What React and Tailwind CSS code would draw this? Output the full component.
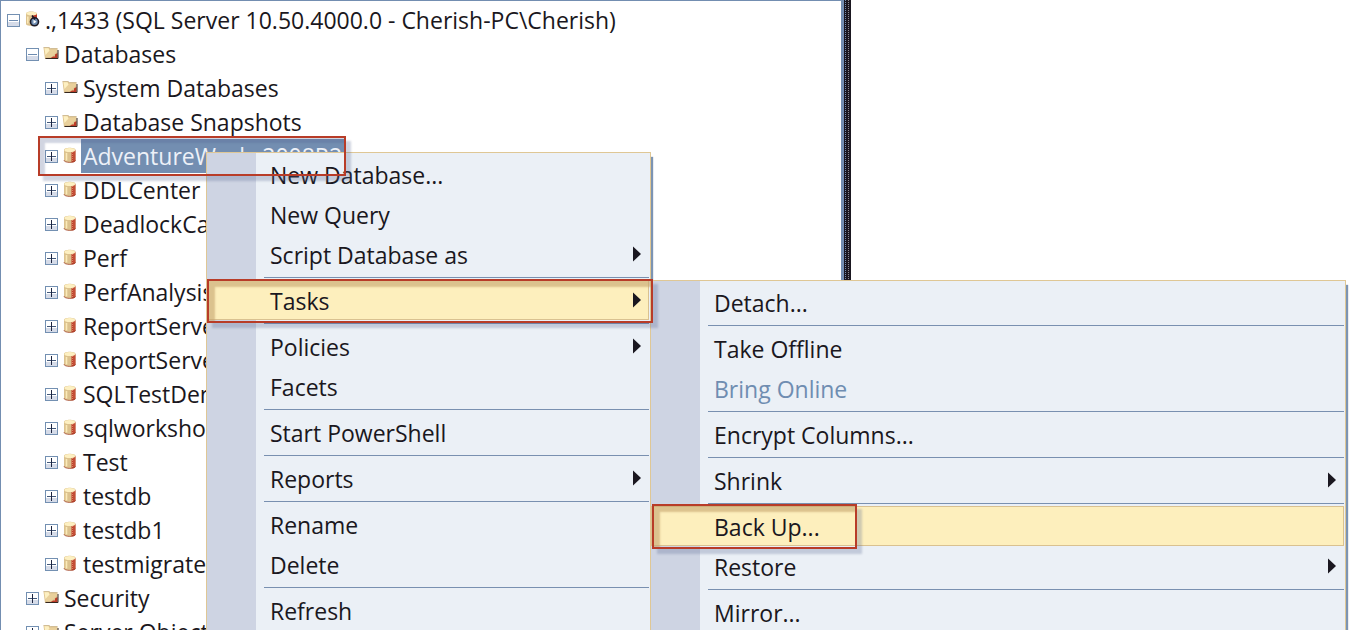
const tree = [
  { level: 0, label: ".,1433 (SQL Server 10.50.4000.0 - Cherish-PC\\Cherish)", icon: "server", open: true },
  { level: 1, label: "Databases", icon: "folder", open: true },
  { level: 2, label: "System Databases", icon: "folder" },
  { level: 2, label: "Database Snapshots", icon: "folder" },
  { level: 2, label: "AdventureWorks2008R2", icon: "database", selected: true },
  { level: 2, label: "DDLCenter", icon: "database" },
  { level: 2, label: "DeadlockCase", icon: "database" },
  { level: 2, label: "Perf", icon: "database" },
  { level: 2, label: "PerfAnalysis", icon: "database" },
  { level: 2, label: "ReportServer", icon: "database" },
  { level: 2, label: "ReportServerTempDB", icon: "database" },
  { level: 2, label: "SQLTestDemo", icon: "database" },
  { level: 2, label: "sqlworkshop", icon: "database" },
  { level: 2, label: "Test", icon: "database" },
  { level: 2, label: "testdb", icon: "database" },
  { level: 2, label: "testdb1", icon: "database" },
  { level: 2, label: "testmigrate", icon: "database" },
  { level: 1, label: "Security", icon: "folder" },
  { level: 1, label: "Server Objects", icon: "folder" },
];

const databaseMenu = [
  [{ label: "New Database..." }, { label: "New Query" }, { label: "Script Database as", sub: true }],
  [{ label: "Tasks", sub: true, active: true }],
  [{ label: "Policies", sub: true }, { label: "Facets" }],
  [{ label: "Start PowerShell" }],
  [{ label: "Reports", sub: true }],
  [{ label: "Rename" }, { label: "Delete" }],
  [{ label: "Refresh" }],
];

const tasksMenu = [
  [{ label: "Detach..." }],
  [{ label: "Take Offline" }, { label: "Bring Online", disabled: true }],
  [{ label: "Encrypt Columns..." }],
  [{ label: "Shrink", sub: true }],
  [{ label: "Back Up...", active: true }, { label: "Restore", sub: true }],
  [{ label: "Mirror..." }],
];

const indents = ["pl-[6px]", "pl-[25px]", "pl-[44px]"];

function Toggle({ open, label }) {
  return (
    <button
      type="button"
      aria-label={(open ? "Collapse " : "Expand ") + label}
      className="mr-1 size-[13px] shrink-0"
    >
      <svg viewBox="0 0 13 13" className="block size-[13px]" shapeRendering="crispEdges" aria-hidden="true">
        <rect x="0.5" y="0.5" width="12" height="12" fill="#fff" stroke="#7390b2" />
        <rect x="1" y="8" width="11" height="4" fill="#d5dbe8" />
        <rect x="2" y="6" width="9" height="1" fill={open ? "#6d8bb0" : "#44597a"} />
        {!open && <rect x="6" y="2" width="1" height="9" fill="#1d2540" />}
      </svg>
    </button>
  );
}

function FolderIcon() {
  return (
    <svg viewBox="0 0 16 16" className="mb-[2px] block size-4" aria-hidden="true">
      <path d="M0.500 2.500h5.500L7.500 3.500h7V14H2z" fill="#dcc28e" />
      <path d="M1 3h4.500l1 1.500h7.500v2L9 12H2.500z" fill="#e9d09b" />
      <path d="M1.500 3.300h4l1 2.200L2.500 10z" fill="#fdf0c2" />
      <path d="M14.500 8V13.500H7l3-2h2V9.500z" fill="#bd3b27" />
      <path d="M2.500 13.500H15V5" fill="none" stroke="#33251f" strokeWidth="1" />
      <path d="M0.500 2.500h5.500L7.500 3.500h7" fill="none" stroke="#c9b48a" strokeWidth="0.800" />
    </svg>
  );
}

function DatabaseIcon() {
  return (
    <svg viewBox="0 0 16 16" className="mb-[2px] block size-4" aria-hidden="true">
      <path d="M2 2.800C2 0 13.500 0 13.500 2.800v10.400c0 2.900-11.500 2.900-11.500 0z" fill="#dcc28e" />
      <path d="M9.500 4.800c2.500 0 4-.8 4-2v10.400c0 1.600-1.800 2.200-4 2.200z" fill="#bd3b27" />
      <path d="M10.500 5v9.500M12 4.500v9" stroke="#e5ab83" strokeWidth="0.700" strokeDasharray="1 1" />
      <ellipse cx="7.700" cy="2.900" rx="5.300" ry="2" fill="#fdf0c2" />
      <path d="M4.500 6v7.500" stroke="#fbeab8" strokeWidth="1.600" />
      <path d="M2 13.200c0 2.900 11.500 2.900 11.500 0" fill="none" stroke="#a34731" strokeWidth="0.800" />
    </svg>
  );
}

function ServerIcon() {
  return (
    <svg viewBox="0 0 16 16" className="mb-[2px] block size-4" aria-hidden="true">
      <path d="M2 2.200C3 0 11 0 13 2.200v11C12 15.500 3 15.500 2 13.200z" fill="#dcc28e" />
      <path d="M8 4.500c3 0 5-.8 5-2.200v8H8z" fill="#bd3b27" />
      <ellipse cx="7.500" cy="2.500" rx="5.200" ry="1.800" fill="#fdf0c2" />
      <path d="M3.800 5.500v7" stroke="#fbeab8" strokeWidth="1.500" />
      <circle cx="10.500" cy="10.800" r="4" fill="#6f8db1" stroke="#1c1a26" strokeWidth="1.600" />
      <path d="M9.500 8.800v4l3-2z" fill="#fff" />
      <path d="M8 4.500l3 4" stroke="#1c1a26" strokeWidth="1.500" />
    </svg>
  );
}

const icons = { server: ServerIcon, folder: FolderIcon, database: DatabaseIcon };

function TreeRow({ node }) {
  const Icon = icons[node.icon];
  return (
    <li
      role="treeitem"
      aria-selected={Boolean(node.selected)}
      className={"flex h-[34px] items-center " + indents[node.level]}
    >
      <Toggle open={node.open} label={node.label} />
      <Icon />
      <span
        className={
          "ml-[3px] flex h-full items-center whitespace-nowrap px-[2px] " +
          (node.selected ? "bg-[#738eb1] text-[#edf1f8]" : "")
        }
      >
        {node.label}
      </span>
    </li>
  );
}

function MenuItem({ item }) {
  return (
    <button
      type="button"
      role="menuitem"
      aria-haspopup={item.sub ? "menu" : undefined}
      disabled={item.disabled}
      className={
        "flex h-10 w-full items-center justify-between border pl-[62px] pr-[6px] text-left whitespace-nowrap " +
        (item.active ? "border-[#d9c190] bg-[#fdefbd] " : "border-transparent ") +
        (item.disabled ? "text-[#6f8db1]" : "")
      }
    >
      <span className="pt-[2px]">{item.label}</span>
      {item.sub && (
        <svg viewBox="0 0 9 16" className="h-4 w-[9px]" aria-hidden="true">
          <path d="M0 0.500v15L8 8z" fill="#1a1720" />
        </svg>
      )}
    </button>
  );
}

function Menu({ groups, label, className }) {
  return (
    <div
      role="menu"
      aria-label={label}
      className={
        "absolute border border-[#dfc795] bg-[linear-gradient(90deg,#ced4e3_49px,#ebf0f6_49px)] py-px pr-px shadow-[2px_5px_1px_#7c94b3] " +
        className
      }
    >
      {groups.map((group, i) => (
        <div key={i} role="group">
          {i > 0 && (
            <div className="flex h-[6px] items-center pl-[57px]">
              <div role="separator" className="h-px w-full bg-[#7990b0]" />
            </div>
          )}
          {group.map((item) => (
            <MenuItem key={item.label} item={item} />
          ))}
        </div>
      ))}
    </div>
  );
}

const coolShadow = "shadow-[5px_5px_2px_rgba(85,100,145,0.27),inset_5px_5px_2px_rgba(85,100,145,0.27)] ";
const warmShadow = "shadow-[5px_5px_2px_rgba(85,100,145,0.27),inset_6px_6px_2px_rgba(196,164,110,0.6)] ";

function Outline({ warm, className }) {
  return (
    <div
      aria-hidden="true"
      className={
        "pointer-events-none absolute border-2 border-[#b83c28] " + (warm ? warmShadow : coolShadow) + className
      }
    />
  );
}

export default function App() {
  return (
    <main className="relative flex h-screen overflow-hidden bg-white font-['Open_Sans','Noto_Sans',sans-serif] text-[23px] leading-[34px] text-[#1a1720]">
      <section className="w-[841px] shrink-0 overflow-hidden border-t border-l border-[#738eb1] pt-[2px]">
        <ul role="tree" aria-label="Object Explorer">
          {tree.map((node) => (
            <TreeRow key={node.label} node={node} />
          ))}
        </ul>
      </section>
      <div className="flex shrink-0 border-l-3 border-[#738eb1] bg-[#1a1720] pr-px pl-px">
        <div className="mr-[2px] w-px bg-[repeating-linear-gradient(#738eb1_0_1px,#1a1720_1px_2px)]" />
        <div className="mr-px w-px bg-[repeating-linear-gradient(#8f8b90_0_1px,#1a1720_1px_2px)]" />
      </div>

      <Menu groups={databaseMenu} label="Database" className="top-[152px] left-[206px] w-[445px]" />
      <Menu groups={tasksMenu} label="Tasks" className="top-[280px] right-2 left-[650px]" />

      <Outline className="top-[136px] left-[38px] h-10 w-[308px]" />
      <Outline warm className="top-[279px] left-[207px] h-11 w-[446px]" />
      <Outline warm className="top-[504px] left-[652px] h-[45px] w-[205px]" />
    </main>
  );
}
